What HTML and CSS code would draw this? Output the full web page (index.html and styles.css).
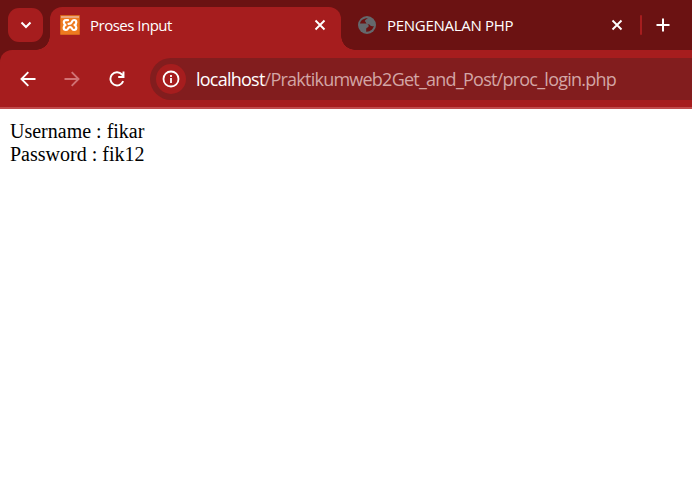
FILE: index.html
```html
<!DOCTYPE html>
<html lang="en">
<head>
<meta charset="utf-8">
<title>Proses Input</title>
<link rel="stylesheet" href="styles.css">
</head>
<body>
<header class="browser">
  <div class="tabstrip">
    <button class="tab-search" aria-label="Search tabs">
      <svg width="12" height="8" viewBox="0 0 12 8"><path d="M1.500 1.500 6 6l4.500-4.500" fill="none" stroke="#fff" stroke-width="2"/></svg>
    </button>
    <div class="tab active">
      <svg class="favicon" width="20" height="20" viewBox="0 0 20 20">
        <rect width="20" height="20" rx="1" fill="#d9661c"/>
        <rect x="1" y="1" width="18" height="18" fill="#ee7a20"/>
        <path d="M1 1h18v2H1z" fill="#e9a57c"/>
        <path d="M8 5.200H6C4.200 5.200 3.700 6.200 3.900 7.600 4 8.800 4.600 9.200 5.500 10 4.200 10.500 3.700 11.500 3.700 12.800 3.700 14.200 4.600 15 6 15 7.600 15 8 13.800 8.500 12.800 9.400 12 10.600 12 11.500 12.800 12 13.800 12.400 15 14 15c1.400 0 2.300-.8 2.300-2.200C16.300 11.500 15.800 10.500 14.500 10 15.800 9.500 16.300 8.500 16.300 7.200 16.300 5.800 15.400 5 14 5 12.400 5 12 6.200 11.500 7.500 11 8.500 10 8.800 8.500 8.800" fill="none" stroke="#fff" stroke-width="2.200" stroke-linejoin="round" stroke-linecap="round"/>
      </svg>
      <span class="tab-title title-one">Proses Input</span>
      <svg class="close" width="12" height="12" viewBox="0 0 12 12"><path d="m1.500 1.500 9 9m0-9-9 9" stroke="#fff" stroke-width="1.900"/></svg>
    </div>
    <div class="tab">
      <svg class="favicon" width="20" height="20" viewBox="0 0 20 20">
        <circle cx="10" cy="10" r="9" fill="#65686c"/>
        <path d="M11 3.200C6.500 3 3.500 5.500 3 8.400h5.500c2 0 3.200 1.200 3.200 2.600 0 1.700-2.500 1.400-2.500 2.800v2.900c4 .3 7.200-2.500 7.600-5.600-2 .4-3.300.2-3.800-1-.5-1.400-2.500-.7-3.500-1-.9-.4-.2-1.900-1-2.300C7 6 8.500 4.500 11 3.200z" fill="#6b1212"/>
      </svg>
      <span class="tab-title title-two">PENGENALAN PHP</span>
      <svg class="close" width="12" height="12" viewBox="0 0 12 12"><path d="m1.500 1.500 9 9m0-9-9 9" stroke="#fff" stroke-width="1.900"/></svg>
    </div>
    <span class="divider"></span>
    <svg class="new-tab" width="14" height="14" viewBox="0 0 14 14"><path d="M7 .5v13M.5 7h13" stroke="#fff" stroke-width="2"/></svg>
  </div>
  <div class="toolbar">
    <svg class="back" width="16" height="16" viewBox="0 0 16 16"><path d="M15.500 8H1.800M8.300 1.200 1.500 8l6.800 6.800" fill="none" stroke="#fff" stroke-width="1.900"/></svg>
    <svg class="forward" width="16" height="16" viewBox="0 0 16 16"><path d="M.5 8h13.700M7.700 1.200 14.500 8l-6.800 6.800" fill="none" stroke="#d17274" stroke-width="1.900"/></svg>
    <svg class="reload" width="16" height="16" viewBox="0 0 16 16"><path d="M14.200 10.200A6.600 6.600 0 1 1 13 3.500L14.500 5.200M14.500 .5V6H9.200" fill="none" stroke="#fff" stroke-width="1.900"/></svg>
    <div class="omnibox">
      <span class="site-info">
        <svg width="18" height="18" viewBox="0 0 18 18"><circle cx="9" cy="9" r="7.500" fill="none" stroke="#fff" stroke-width="1.800"/><path d="M9 8v5M9 5v1.900" stroke="#fff" stroke-width="1.800"/></svg>
      </span>
      <span class="url"><span class="host">localhost</span>/Praktikumweb2Get_and_Post/proc_login.php</span>
    </div>
  </div>
</header>
<main>Username : fikar<br>Password : fik12</main>
</body>
</html>
```
FILE: styles.css
```css
* { box-sizing: border-box; }
body { margin: 0; background: #fff; overflow: hidden; }
svg { display: block; flex: none; }
.browser { font-family: "Open Sans", "Noto Sans", sans-serif; color: #fff; background: #6b1212; }
.tabstrip { display: flex; height: 50px; padding: 7px 0 0 8px; }
.tab-search {
  display: grid; place-items: center;
  width: 35px; height: 34px; margin: 1px 7px 0 0; padding: 0;
  border: 0; border-radius: 11px; background: #a61d1e;
}
.tab { position: relative; display: flex; align-items: center; height: 43px; padding: 0 15px 7px 10px; width: 291px; }
.tab + .tab { width: 299px; padding-right: 17px; padding-left: 16px; }
.tab.active { background: #a61d1e; border-radius: 12px 12px 0 0; }
.tab.active::before, .tab.active::after {
  content: ""; position: absolute; bottom: 0; width: 14px; height: 14px;
}
.tab.active::before { left: -14px; background: radial-gradient(circle at 0 0, transparent 13.500px, #a61d1e 14px); }
.tab.active::after { right: -14px; background: radial-gradient(circle at 100% 0, transparent 13.500px, #a61d1e 14px); }
.tab-title { margin-left: 10px; font-size: 15px; line-height: 20px; white-space: nowrap; }
.title-one { letter-spacing: -.5px; }
.title-two { letter-spacing: -.28px; }
.close { margin-left: auto; }
.divider { width: 2px; height: 20px; margin-top: 8px; border-radius: 1px; background: #a61d1e; }
.new-tab { margin: 11px 0 0 14px; }
.toolbar {
  display: flex; align-items: center; height: 59px; padding-left: 20px;
  background: #a61d1e; border-bottom: 2px solid #c04b4c; border-top-left-radius: 12px;
}
.forward { margin-left: 28px; }
.reload { margin-left: 29px; }
.omnibox {
  display: flex; align-items: center; flex: 1; height: 42px; margin-left: 25px; padding-left: 6px;
  border-radius: 21px 0 0 21px; background: #821d1e;
}
.site-info { display: grid; place-items: center; width: 30px; height: 30px; border-radius: 50%; background: #a61d1e; }
.url { margin-left: 10px; font-size: 18px; line-height: 24px; letter-spacing: -.76px; white-space: nowrap; color: #d3a5a5; }
.host { color: #fff; }
main { padding: 10.500px 10px; font: 20px/23px "Liberation Serif", "Times New Roman", serif; color: #000; }
```
